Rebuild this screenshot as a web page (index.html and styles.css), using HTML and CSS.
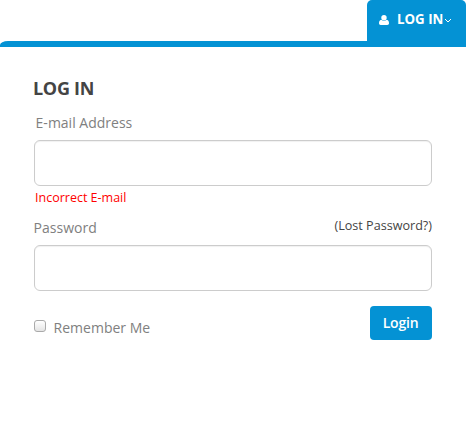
FILE: index.html
```html
<!DOCTYPE html>
<html lang="en">
<head>
<meta charset="utf-8">
<title>Log in</title>
<link rel="stylesheet" href="styles.css">
</head>
<body>
<header class="header">
  <a class="tab">
    <svg class="user" viewBox="0 0 10 10" width="10" height="10"><circle cx="5" cy="2.7" r="2.7"/><path d="M2.2 4.8C.6 5.1 0 6.500 0 8.300 0 9.400.7 10 1.700 10h6.600c1 0 1.700-.6 1.700-1.700 0-1.800-.6-3.200-2.200-3.500C6.300 6.300 3.700 6.300 2.200 4.800z"/></svg>
    <span class="tab-text">LOG IN</span>
    <svg class="chevron" viewBox="0 0 8 5" width="8" height="5"><path d="M1 1l3 3 3-3"/></svg>
  </a>
</header>
<form class="form">
  <h1 class="title">LOG IN</h1>
  <label class="label email-label" for="email">E-mail Address</label>
  <input class="field" id="email" type="text">
  <p class="error">Incorrect E-mail</p>
  <div class="row">
    <label class="label" for="password">Password</label>
    <a class="lost">(Lost Password?)</a>
  </div>
  <input class="field" id="password" type="password">
  <div class="actions">
    <label class="remember"><input class="check" type="checkbox"><span>Remember Me</span></label>
    <button class="submit" type="button">Login</button>
  </div>
</form>
</body>
</html>
```
FILE: styles.css
```css
* { box-sizing: border-box; }
body {
  margin: 0;
  background: #fff;
  font-family: "Open Sans", sans-serif;
  font-size: 14px;
  color: #808080;
}
.header {
  display: flex;
  flex-direction: column;
  align-items: flex-end;
}
.header::after {
  content: "";
  width: 100%;
  height: 6px;
  background: #0492d4;
  border-top-left-radius: 8px 4px;
}
.tab {
  display: flex;
  align-items: center;
  width: 99px;
  height: 41px;
  padding: 0 0 2px 12px;
  background: #0492d4;
  border-radius: 5px 5px 0 0;
  color: #fff;
}
.user { fill: #fff; margin-top: 1px; }
.tab-text {
  margin: -1px 1px 0 8px;
  font-size: 13.3px;
  font-weight: 700;
  line-height: 20px;
  white-space: nowrap;
}
.chevron { fill: none; stroke: #fff; stroke-width: 1; margin-top: 1px; }
.form {
  display: flex;
  flex-direction: column;
  width: 398px;
  margin: 29px 0 0 34px;
}
.title {
  margin: 0 0 0 -1px;
  font-size: 18px;
  font-weight: 700;
  letter-spacing: -.3px;
  line-height: 25px;
  color: #444;
}
.label { line-height: 20px; }
.email-label { margin: 12px 0 7px 1.6px; }
.field {
  width: 100%;
  height: 46px;
  padding: 0 12px;
  border: 1px solid #ccc;
  border-radius: 6px;
  background: #fff;
  box-shadow: inset 0 1px 1px rgba(0, 0, 0, .06);
  font: inherit;
}
.error {
  margin: 2px 0 0 1px;
  font-size: 12.5px;
  line-height: 20px;
  color: #f00;
}
.row {
  display: flex;
  justify-content: space-between;
  margin: 10px 0 7px;
}
.row .label { margin-left: -.4px; }
.lost {
  margin-top: -2px;
  font-size: 12.6px;
  line-height: 20px;
  color: #444;
}
.actions {
  display: flex;
  justify-content: space-between;
  margin-top: 15px;
}
.remember {
  display: flex;
  align-items: flex-start;
  gap: 7.6px;
  padding-top: 12px;
  line-height: 20px;
}
.check {
  appearance: none;
  width: 12px;
  height: 12px;
  margin: 2px 0 0;
  border: 1px solid #aaa;
  border-radius: 3px;
  background: linear-gradient(#fff, #e4e4e4);
}
.submit {
  width: 62px;
  height: 34px;
  padding: 0 1px 0 0;
  border: 0;
  border-radius: 4px;
  background: #0492d4;
  color: #fff;
  font: 600 14px/34px "Open Sans", sans-serif;
  letter-spacing: -.2px;
}
```
